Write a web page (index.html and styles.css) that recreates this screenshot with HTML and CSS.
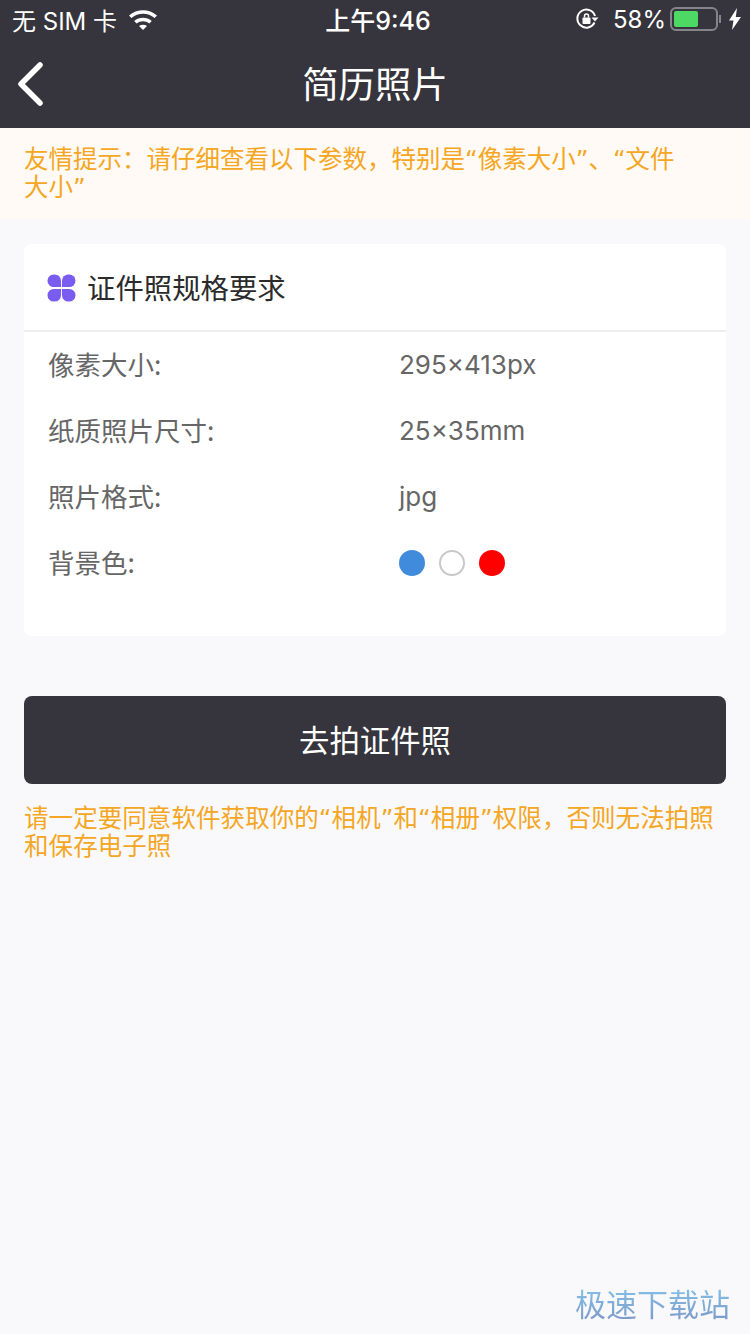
FILE: index.html
```html
<!DOCTYPE html>
<html lang="zh-CN">
  <head>
    <meta charset="UTF-8" />
    <meta name="viewport" content="width=device-width, initial-scale=1.0" />
    <title>简历照片</title>
    <link rel="stylesheet" href="styles.css">
  </head>
  <body>
    <header class="top-bar">
      <div class="status-bar">
        <div class="status-left">
          <span class="carrier">无 SIM 卡</span>
          <svg class="wifi-icon" width="30" height="22" viewBox="0 0 30 22">
            <path d="M1 7.500C8.800.6 21.200.6 29 7.500l-2.400 2.600C20 4.400 10 4.400 3.400 10.100z" fill="#fff"/>
            <path d="M6.200 13C11.200 8.600 18.800 8.600 23.800 13l-2.500 2.600c-3.600-3-9-3-12.600 0z" fill="#fff"/>
            <path d="M11 18c2.400-1.800 5.600-1.800 8 0l-4 4z" fill="#fff"/>
          </svg>
        </div>
        <span class="clock">上午9:46</span>
        <div class="status-right">
          <svg class="lock-icon" width="24" height="24" viewBox="0 0 24 24">
            <path d="M19.500 15.500A9 9 0 1 1 20 9" fill="none" stroke="#fff" stroke-width="2"/>
            <path d="M16.500 10.500h7l-3.500 4z" fill="#fff"/>
            <rect x="7.500" y="10.500" width="8" height="6.500" rx="1" fill="#fff"/>
            <path d="M9.500 10.500V9a2 2 0 0 1 4 0v1.500" fill="none" stroke="#fff" stroke-width="1.500"/>
          </svg>
          <span class="battery-text">58%</span>
          <div class="battery">
            <div class="battery-level"></div>
          </div>
          <div class="battery-cap"></div>
          <svg class="bolt-icon" width="12" height="22" viewBox="0 0 12 22">
            <path d="M8 0L0 12.500h4.500L3 22l9-13H6.800z" fill="#fff"/>
          </svg>
        </div>
      </div>
      <nav class="nav-bar">
        <svg class="back-icon" width="30" height="46" viewBox="0 0 30 46">
          <path d="M24 4L5 23l19 19" fill="none" stroke="#fff" stroke-width="5.500" stroke-linecap="round" stroke-linejoin="round"/>
        </svg>
        <h1 class="nav-title">简历照片</h1>
      </nav>
    </header>

    <p class="notice">友情提示：请仔细查看以下参数，特别是“像素大小”、“文件大小”</p>

    <section class="spec-card">
      <div class="spec-head">
        <svg class="clover-icon" width="29" height="28" viewBox="0 0 30 28">
          <path d="M7 0h1a6.500 6.500 0 0 1 6.500 6.500v6.500H7A6.500 6.500 0 0 1 7 0z" fill="#7a5cf0"/>
          <path d="M22 0h1a6.500 6.500 0 0 1 0 13h-7.500V6.500A6.500 6.500 0 0 1 22 0z" fill="#7a5cf0"/>
          <path d="M7 15h7.500v6.500A6.500 6.500 0 0 1 8 28H7a6.500 6.500 0 0 1 0-13z" fill="#7a5cf0"/>
          <path d="M15.500 15H23a6.500 6.500 0 0 1 0 13h-1a6.500 6.500 0 0 1-6.500-6.500z" fill="#7a5cf0"/>
        </svg>
        <h2 class="spec-title">证件照规格要求</h2>
      </div>
      <div class="spec-row">
        <span class="spec-label">像素大小:</span>
        <span class="spec-value">295×413px</span>
      </div>
      <div class="spec-row">
        <span class="spec-label">纸质照片尺寸:</span>
        <span class="spec-value">25×35mm</span>
      </div>
      <div class="spec-row">
        <span class="spec-label">照片格式:</span>
        <span class="spec-value">jpg</span>
      </div>
      <div class="spec-row">
        <span class="spec-label">背景色:</span>
        <div class="swatches">
          <span class="swatch swatch-blue"></span>
          <span class="swatch swatch-white"></span>
          <span class="swatch swatch-red"></span>
        </div>
      </div>
    </section>

    <button type="button" class="shoot-btn">去拍证件照</button>
    <p class="permission-note">请一定要同意软件获取你的“相机”和“相册”权限，否则无法拍照和保存电子照</p>

    <div class="watermark">极速下载站</div>
  </body>
</html>
```

FILE: styles.css
```css
* {
  box-sizing: border-box;
}

body {
  margin: 0;
  height: 1334px;
  overflow: hidden;
  position: relative;
  background: #f9f9fc;
  font-family: "Noto Sans CJK SC", Inter, sans-serif;
}

.top-bar {
  height: 128px;
  background: #36343c;
  color: #fff;
}

.status-bar {
  height: 40px;
  padding: 0 9px 0 12px;
  display: flex;
  align-items: center;
  justify-content: space-between;
  font-family: Inter, "Noto Sans CJK SC", sans-serif;
  font-size: 24px;
}

.status-left,
.status-right {
  display: flex;
  align-items: center;
  width: 240px;
}

.status-left {
  margin-top: -2px;
}

.status-right {
  justify-content: flex-end;
  margin-top: -2px;
}

.clock {
  margin: -2px 0 0 3px;
  font-size: 25px;
  font-weight: 500;
}

.wifi-icon {
  margin-left: 11px;
}

.lock-icon {
  margin-right: 14px;
}

.battery {
  width: 48px;
  height: 24px;
  margin-left: 4px;
  padding: 2px;
  border: 2px solid #85848a;
  border-radius: 6px;
}

.battery-level {
  width: 24px;
  height: 16px;
  background: #4cd964;
  border-radius: 2px;
}

.battery-cap {
  width: 2px;
  height: 8px;
  margin-left: 1px;
  background: #85848a;
}

.bolt-icon {
  margin-left: 8px;
}

.nav-bar {
  height: 88px;
  padding-bottom: 4px;
  position: relative;
  display: flex;
  align-items: center;
  justify-content: center;
}

.back-icon {
  position: absolute;
  left: 16px;
  top: 21px;
}

.nav-title {
  margin: 0;
  font-size: 36.4px;
  font-weight: 400;
  line-height: 50px;
}

.notice {
  margin: 0;
  height: 91px;
  padding: 18px 60px 0 24px;
  background: #fffaf5;
  color: #f5a623;
  font-family: "DejaVu Sans", "Noto Sans CJK SC", sans-serif;
  font-size: 24.5px;
  line-height: 28px;
}

.spec-card {
  margin: 25px 24px 0;
  height: 392px;
  background: #fff;
  border-radius: 8px;
}

.spec-head {
  height: 88px;
  padding: 0 0 2px 23px;
  display: flex;
  align-items: center;
  border-bottom: 2px solid #eeeeef;
}

.clover-icon {
  margin: 4px 11px 0 0;
}

.spec-title {
  margin: 0;
  font-size: 28.4px;
  font-weight: 400;
  color: #2b2b2b;
}

.spec-row {
  height: 66px;
  padding-left: 24px;
  display: flex;
  align-items: center;
  font-size: 26.5px;
  color: #666;
}

.spec-label {
  width: 352px;
  margin-top: -4px;
}

.spec-value {
  margin: -2px 0 0 -1px;
  font-family: Inter, sans-serif;
  font-size: 26px;
}

.swatches {
  display: flex;
  gap: 14px;
  margin-left: -1px;
}

.swatch {
  width: 26px;
  height: 26px;
  border-radius: 50%;
}

.swatch-blue {
  background: #418bdc;
}

.swatch-white {
  background: #fff;
  border: 2px solid #c8c8c8;
}

.swatch-red {
  background: #fe0000;
}

.shoot-btn {
  display: block;
  width: 702px;
  height: 88px;
  margin: 60px 24px 0;
  padding-bottom: 4px;
  border: none;
  border-radius: 8px;
  background: #36343c;
  color: #fff;
  font-family: inherit;
  font-size: 30.4px;
}

.permission-note {
  margin: 21px 24px 0;
  color: #f5a623;
  font-family: "DejaVu Sans", "Noto Sans CJK SC", sans-serif;
  font-size: 24.5px;
  letter-spacing: 0.07px;
  line-height: 28px;
}

.watermark {
  position: absolute;
  right: 20px;
  bottom: 11px;
  font-size: 31px;
  line-height: 40px;
  background: linear-gradient(#84c6ea, #7d97c8);
  -webkit-background-clip: text;
  background-clip: text;
  color: transparent;
}
```
